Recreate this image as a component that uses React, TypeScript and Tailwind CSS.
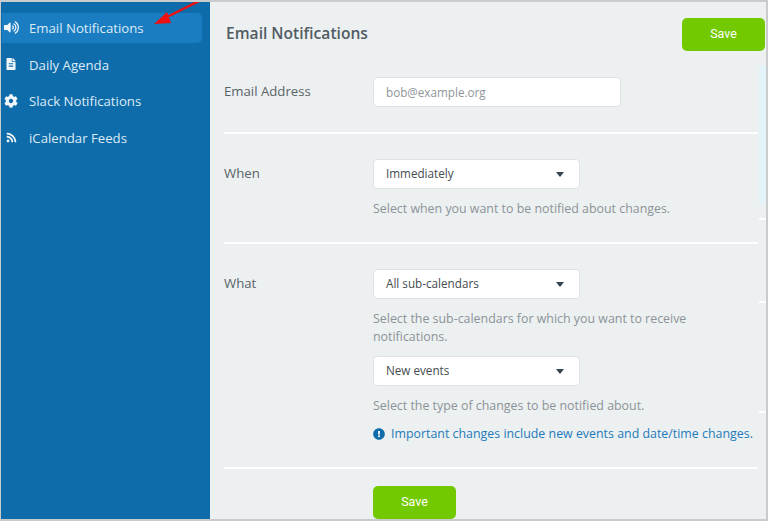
import { FaVolumeUp, FaFileAlt, FaCog, FaRss, FaExclamationCircle } from "react-icons/fa";
import type { ReactNode } from "react";

const font = { fontFamily: '"Open Sans", sans-serif' };

function NavItem({ icon, label, active }: { icon: ReactNode; label: string; active?: boolean }) {
  return (
    <div className={`flex items-center h-[30px] mb-[6.5px] pt-[2px] rounded-r-[5px] text-[13.2px] font-medium text-[#dcebf5] ${active ? "bg-[#1a7cc1]" : ""}`}>
      <span className="w-[27px] flex justify-center pr-[9px] pb-[3px] text-[#f2f7fb]">{icon}</span>
      {label}
    </div>
  );
}

function Select({ value }: { value: string }) {
  return (
    <div className="flex items-center justify-between w-[207px] h-[30px] pl-[12px] pr-[15px] bg-white border border-[#e0e3e5] rounded-[4px] text-[11.7px] text-[#444b50]">
      {value}
      <span className="w-0 h-0 border-x-[4px] border-x-transparent border-t-[5px] border-t-[#34444f]" />
    </div>
  );
}

function Row({ label, children }: { label: string; children: ReactNode }) {
  return (
    <div className="flex">
      <div className="w-[149px] shrink-0 text-[13.2px] leading-[28px] text-[#5b6368]">{label}</div>
      <div className="flex-1">{children}</div>
    </div>
  );
}

function Help({ children }: { children: ReactNode }) {
  return <p className="text-[12.4px] leading-[18px] text-[#8c9398]">{children}</p>;
}

function SaveButton({ className }: { className: string }) {
  return (
    <button className={`h-[33px] rounded-[5px] bg-[#73c900] text-white text-[12.5px] ${className}`} style={{ fontFamily: '"Roboto", sans-serif' }}>
      Save
    </button>
  );
}

export default function App() {
  return (
    <div className="relative w-[768px] h-[521px] overflow-hidden flex bg-[#ecf0f1] border-t-2 border-b-2 border-r-2 border-l border-[#c9cccd]" style={font}>
      {/* sidebar */}
      <aside className="w-[209px] shrink-0 bg-[#0f6cab] pt-[11px] pr-[8px] pl-[1px]">
        <NavItem active icon={<FaVolumeUp className="text-[15px]" />} label="Email Notifications" />
        <NavItem icon={<FaFileAlt className="text-[12px]" />} label="Daily Agenda" />
        <NavItem icon={<FaCog className="text-[14px]" />} label="Slack Notifications" />
        <NavItem icon={<FaRss className="text-[11px]" />} label="iCalendar Feeds" />
      </aside>

      {/* content */}
      <main className="relative flex-1 pl-[14px] pr-[8px]">
        <header className="flex items-center justify-between pt-[15px] h-[66px] -mr-[7px] pb-[16px]">
          <h1 className="pl-[2px] pb-[2px] text-[15.6px] font-semibold text-[#515c63]">Email Notifications</h1>
          <SaveButton className="w-[83px]" />
        </header>

        <div className="pt-[9px] pb-[25px] border-b-2 border-white">
          <Row label="Email Address">
            <input
              readOnly
              placeholder="bob@example.org"
              className="block w-[248px] h-[30px] px-[12px] bg-white border border-[#e0e3e5] rounded-[4px] text-[11.7px] placeholder:text-[#8f9599]"
            />
          </Row>
        </div>

        <div className="pt-[25px] pb-[24px] border-b-2 border-white">
          <Row label="When">
            <Select value="Immediately" />
            <div className="mt-[11px]">
              <Help>Select when you want to be notified about changes.</Help>
            </div>
          </Row>
        </div>

        <div className="pt-[25px] pb-[24px] border-b-2 border-white">
          <Row label="What">
            <Select value="All sub-calendars" />
            <div className="mt-[11px] w-[350px]">
              <Help>Select the sub-calendars for which you want to receive notifications.</Help>
            </div>
            <div className="mt-[10px]">
              <Select value="New events" />
            </div>
            <div className="mt-[11px]">
              <Help>Select the type of changes to be notified about.</Help>
            </div>
            <div className="mt-[10px] flex items-center gap-[6px] text-[12.4px] leading-[18px] text-[#1f7ab8] whitespace-nowrap">
              <FaExclamationCircle className="text-[#0f6cab] text-[12px] shrink-0" />
              Important changes include new events and date/time changes.
            </div>
          </Row>
        </div>

        <div className="pt-[17px] pl-[149px]">
          <SaveButton className="w-[83px]" />
        </div>

        {/* scrollbar */}
        <div className="absolute right-[0px] top-[64px] w-[7px] h-[137px] bg-[#e2f3fa] rounded-r-[4px]" />
        <div className="absolute right-[0px] top-[216px] w-[7px] h-[2px] bg-white" />
        <div className="absolute right-[0px] top-[299px] w-[7px] h-[2px] bg-white" />
        <div className="absolute right-[0px] top-[409px] w-[7px] h-[2px] bg-white" />
      </main>

      {/* red annotation arrow */}
      <svg className="absolute left-0 top-0 pointer-events-none" width="240" height="40" viewBox="0 0 240 40">
        <line x1="202" y1="-3" x2="166" y2="15" stroke="#ee1111" strokeWidth="2.5" />
        <polygon points="153,22 166,10 170,21" fill="#ee1111" />
      </svg>
    </div>
  );
}
